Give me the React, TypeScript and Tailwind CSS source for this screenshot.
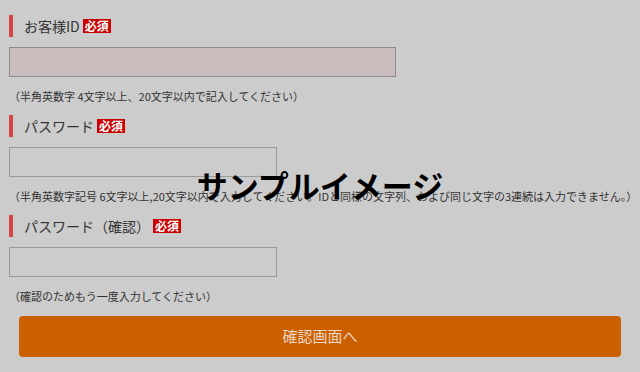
const jp = { fontFamily: '"Noto Sans CJK JP", "Noto Sans", sans-serif' };

function FieldLabel({ text }: { text: string }) {
  return (
    <div className="flex h-[22px] items-center border-l-4 border-[#d64545] pl-[11px]">
      <span className="text-[14px] leading-none text-[#333]">{text}</span>
      <span className="ml-[3px] flex h-[14px] items-center bg-[#cc0000] px-[2px] text-[12px] font-bold leading-none text-white">
        必須
      </span>
    </div>
  );
}

interface FieldProps {
  label: string;
  hint: string;
  wide?: boolean;
}

function Field({ label, hint, wide }: FieldProps) {
  return (
    <div className="flex flex-col">
      <FieldLabel text={label} />
      <div
        className={
          wide
            ? "mt-[10px] h-[30px] w-[387px] border border-[#8c8c8c] bg-[#cbbdbd]"
            : "mt-[10px] h-[30px] w-[268px] border border-[#9a9a9a] bg-[#cccccc]"
        }
      />
      <p className="mt-[11px] h-[16px] whitespace-nowrap text-[11px] leading-[16px] text-[#333]">
        {hint}
      </p>
    </div>
  );
}

export default function App() {
  return (
    <div className="relative h-[372px] w-[640px] overflow-hidden bg-[#cccccc]" style={jp}>
      <div className="flex flex-col gap-[11px] pl-[9px] pt-[15px]">
        <Field label="お客様ID" hint="（半角英数字 4文字以上、20文字以内で記入してください）" wide />
        <Field
          label="パスワード"
          hint="（半角英数字記号 6文字以上,20文字以内で入力してください。IDと同様の文字列、および同じ文字の3連続は入力できません。）"
        />
        <Field label="パスワード（確認）" hint="（確認のためもう一度入力してください）" />
      </div>
      <div className="mt-[12px] px-[19px]">
        <button className="flex h-[41px] w-full items-center justify-center rounded-[4px] bg-[#cc6000] text-[15px] text-[#ead6c6]">
          確認画面へ
        </button>
      </div>
      <div className="pointer-events-none absolute left-0 right-0 top-[166px] text-center text-[31px] font-bold leading-[38px] text-black">
        サンプルイメージ
      </div>
    </div>
  );
}
